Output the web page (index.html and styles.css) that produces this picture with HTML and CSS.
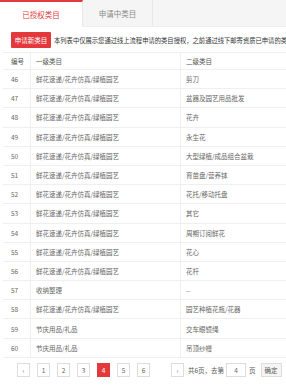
FILE: index.html
```html
<!DOCTYPE html>
<html>
<head>
<meta charset="utf-8">
<link rel="stylesheet" href="styles.css">
</head>
<body>
<div class="page">
  <div class="tabs">
    <div class="tab active">已授权类目</div>
    <div class="tab">申请中类目</div>
  </div>
  <div class="toolbar">
    <button class="btn-red">申请新类目</button>
    <span class="note">本列表中仅展示您通过线上流程申请的类目授权，之前通过线下邮寄资质已申请的类目暂不展示</span>
  </div>
  <div class="table">
    <div class="row head"><div class="c1">编号</div><div class="c2">一级类目</div><div class="c3">二级类目</div></div>
    <div class="row"><div class="c1">46</div><div class="c2">鲜花速递/花卉仿真/绿植园艺</div><div class="c3">剪刀</div></div>
    <div class="row"><div class="c1">47</div><div class="c2">鲜花速递/花卉仿真/绿植园艺</div><div class="c3">盆器及园艺用品批发</div></div>
    <div class="row"><div class="c1">48</div><div class="c2">鲜花速递/花卉仿真/绿植园艺</div><div class="c3">花卉</div></div>
    <div class="row"><div class="c1">49</div><div class="c2">鲜花速递/花卉仿真/绿植园艺</div><div class="c3">永生花</div></div>
    <div class="row"><div class="c1">50</div><div class="c2">鲜花速递/花卉仿真/绿植园艺</div><div class="c3">大型绿植/成品组合盆栽</div></div>
    <div class="row"><div class="c1">51</div><div class="c2">鲜花速递/花卉仿真/绿植园艺</div><div class="c3">育苗盘/营养钵</div></div>
    <div class="row"><div class="c1">52</div><div class="c2">鲜花速递/花卉仿真/绿植园艺</div><div class="c3">花托/移动托盘</div></div>
    <div class="row"><div class="c1">53</div><div class="c2">鲜花速递/花卉仿真/绿植园艺</div><div class="c3">其它</div></div>
    <div class="row"><div class="c1">54</div><div class="c2">鲜花速递/花卉仿真/绿植园艺</div><div class="c3">周期订阅鲜花</div></div>
    <div class="row"><div class="c1">55</div><div class="c2">鲜花速递/花卉仿真/绿植园艺</div><div class="c3">花心</div></div>
    <div class="row"><div class="c1">56</div><div class="c2">鲜花速递/花卉仿真/绿植园艺</div><div class="c3">花杆</div></div>
    <div class="row"><div class="c1">57</div><div class="c2">收纳整理</div><div class="c3">--</div></div>
    <div class="row"><div class="c1">58</div><div class="c2">鲜花速递/花卉仿真/绿植园艺</div><div class="c3">园艺种植花瓶/花器</div></div>
    <div class="row"><div class="c1">59</div><div class="c2">节庆用品/礼品</div><div class="c3">交车眼镜绳</div></div>
    <div class="row"><div class="c1">60</div><div class="c2">节庆用品/礼品</div><div class="c3">吊顶纱幔</div></div>
  </div>
  <div class="pager">
    <span class="pg">&lsaquo;</span>
    <span class="pg">1</span>
    <span class="pg">2</span>
    <span class="pg">3</span>
    <span class="pg cur">4</span>
    <span class="pg">5</span>
    <span class="pg">6</span>
    <span class="pg next">&rsaquo;</span>
    <span class="ptext">共6页，去第</span>
    <span class="pinput">4</span>
    <span class="ptext">页</span>
    <span class="pok">确定</span>
  </div>
</div>
</body>
</html>
```

FILE: styles.css
```css
* { box-sizing: border-box; }
html, body { margin: 0; padding: 0; }
body {
  width: 286px;
  height: 385px;
  overflow: hidden;
  background: #fff;
  font-family: "Noto Sans CJK SC", "Noto Sans", sans-serif;
  color: #666;
  font-size: 6.5px;
}
.page { width: 286px; }
.tabs {
  display: flex;
  height: 27px;
  background: #f5f5f5;
  border-bottom: 1px solid #eee;
}
.tab {
  width: 70px;
  display: flex;
  align-items: center;
  justify-content: center;
  font-size: 7.5px;
  color: #888;
  border-right: 1px solid #e8e8e8;
}
.tab.active {
  width: 83px;
  background: #fff;
  color: #e4393c;
  border-top: 2px solid #e4393c;
  height: 27px;
}
.toolbar {
  display: flex;
  align-items: center;
  padding: 5px 0 0 11px;
  height: 21px;
  white-space: nowrap;
}
.btn-red {
  width: 40px;
  height: 16px;
  border: 0;
  padding: 0;
  background: #e4393c;
  color: #fff;
  font-family: inherit;
  font-size: 6.5px;
  border-radius: 1px;
  flex-shrink: 0;
}
.note {
  margin-left: 3px;
  color: #333;
  font-size: 6.3px;
}
.table {
  margin: 4px 0 0 3px;
  width: 300px;
}
.row {
  display: grid;
  grid-template-columns: 27px 150px 1fr;
  height: 19.2px;
  border-bottom: 1px solid #efefef;
  align-items: center;
}
.row.head {
  height: 18px;
  border-top: 1px solid #efefef;
  color: #555;
}
.row > div {
  height: 100%;
  display: flex;
  align-items: center;
  padding-left: 5px;
  white-space: nowrap;
}
.row .c1 { padding-left: 8px; }
.row .c2, .row .c3 { border-left: 1px solid #efefef; }
.pager {
  display: flex;
  align-items: center;
  padding: 5px 0 0 17px;
  white-space: nowrap;
}
.pg {
  width: 13px;
  height: 14px;
  border: 1px solid #ddd;
  background: #fff;
  display: flex;
  align-items: center;
  justify-content: center;
  margin-right: 7px;
  color: #666;
  font-size: 6.5px;
}
.pg.cur {
  background: #e4393c;
  border-color: #e4393c;
  color: #fff;
}
.pg.next { margin-left: 14px; margin-right: 4px; }
.ptext { color: #555; }
.pinput {
  width: 20px;
  height: 14px;
  border: 1px solid #ddd;
  margin: 0 3px 0 2px;
  display: flex;
  align-items: center;
  justify-content: center;
}
.pok {
  margin-left: 5px;
  width: 21px;
  height: 14px;
  border: 1px solid #ddd;
  background: #f5f5f5;
  display: flex;
  align-items: center;
  justify-content: center;
  color: #555;
}
```
